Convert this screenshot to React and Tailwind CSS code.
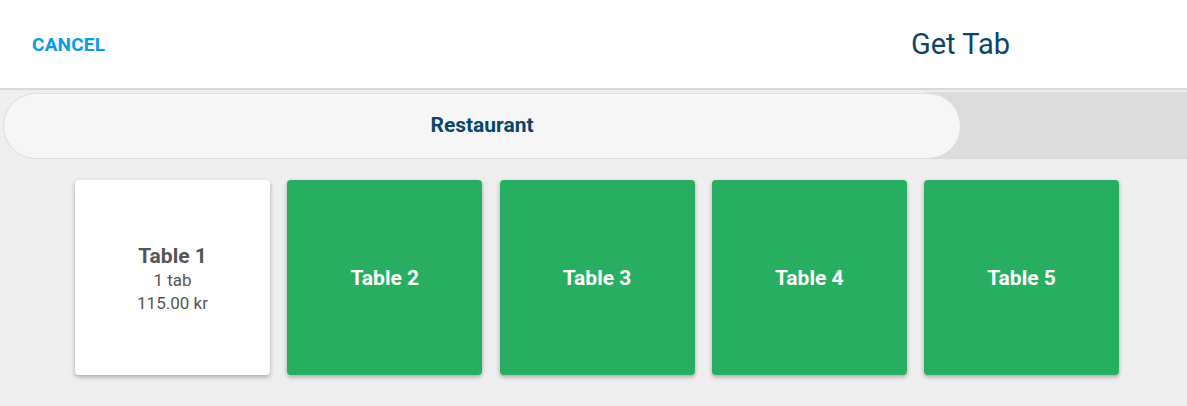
export default function App() {
  const font = { fontFamily: 'Roboto, "Liberation Sans", sans-serif' };
  return (
    <div className="w-[1187px] h-[406px] bg-[#eeeeee] overflow-hidden" style={font}>
      <div className="h-[90px] bg-white border-b-2 border-[#d8d8d8] flex items-center justify-between pl-[32px] pr-[177px]">
        <span className="text-[19px] font-bold text-[#0a9be0] tracking-[0.2px] leading-none">CANCEL</span>
        <span className="text-[29px] text-[#0b4566] leading-none">Get Tab</span>
      </div>
      <div className="mt-[2px] h-[67px] bg-[linear-gradient(to_right,#eeeeee_78%,#dcdcdc_78%)] flex items-center">
        <div className="ml-[3px] w-[958px] h-[66px] rounded-full bg-[#f6f6f6] border border-[#dddddd] flex items-center justify-center">
          <span className="text-[21px] font-bold text-[#0b4566]">Restaurant</span>
        </div>
      </div>
      <div className="flex pl-[75px] pt-[21px] gap-[17.25px]">
        <div className="w-[195px] h-[195px] rounded-[4px] bg-white shadow-[0_2px_4px_rgba(0,0,0,0.3)] flex flex-col items-center justify-center pt-[2px] text-[#555555]">
          <span className="text-[21px] font-bold leading-[26px]">Table 1</span>
          <span className="text-[17px] leading-[23px]">1 tab</span>
          <span className="text-[17px] leading-[22px]">115.00 kr</span>
        </div>
        {["Table 2", "Table 3", "Table 4", "Table 5"].map((t) => (
          <div key={t} className="w-[195px] h-[195px] rounded-[4px] bg-[#27ae60] shadow-[0_2px_4px_rgba(0,0,0,0.3)] flex items-center justify-center pt-[2px]">
            <span className="text-[21px] font-bold text-white">{t}</span>
          </div>
        ))}
      </div>
    </div>
  );
}
